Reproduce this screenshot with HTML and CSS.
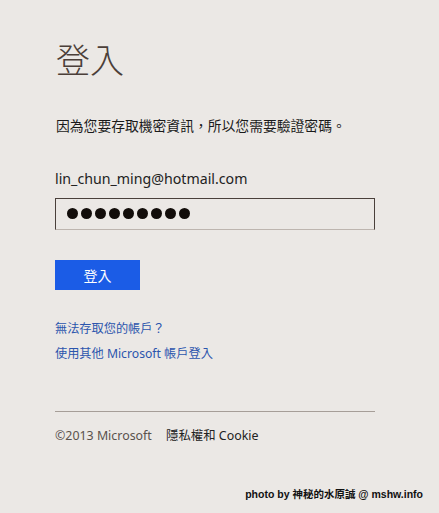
FILE: index.html
```html
<!DOCTYPE html>
<html lang="zh-Hant">
<head>
    <meta charset="UTF-8">
    <meta name="viewport" content="width=device-width, initial-scale=1.0">
    <title>登入</title>
    <link rel="stylesheet" href="styles.css">
</head>
<body>

    <div class="page">
        <h1 class="title">登入</h1>
        <p class="note">因為您要存取機密資訊，所以您需要驗證密碼。</p>

        <div class="account">lin_chun_ming@hotmail.com</div>
        <div class="password">
            <span class="dot"></span><span class="dot"></span><span class="dot"></span>
            <span class="dot"></span><span class="dot"></span><span class="dot"></span>
            <span class="dot"></span><span class="dot"></span><span class="dot"></span>
        </div>

        <button class="submit">登入</button>

        <div class="links">
            <a href="#">無法存取您的帳戶？</a>
            <a href="#">使用其他 Microsoft 帳戶登入</a>
        </div>

        <div class="footer">
            <span class="copy">©2013 Microsoft</span>
            <a href="#">隱私權和 Cookie</a>
        </div>
    </div>

    <div class="credit">photo by 神秘的水原誠 @ mshw.info</div>

</body>
</html>
```

FILE: styles.css
```css
body {
    margin: 0;
    padding: 0;
    background-color: #ebe8e5;
    font-family: "Noto Sans", "Noto Sans CJK TC", sans-serif;
    color: #1a1a1a;
}
.page {
    width: 320px;
    padding: 36px 0 0 55px;
}
.title {
    margin: 0 0 0 1px;
    font-size: 34px;
    font-weight: 300;
    line-height: 48px;
    color: #4b3f39;
}
.note {
    margin: 32px 0 0 1px;
    font-size: 13.8px;
    line-height: 20px;
}
.account {
    margin-top: 33px;
    font-size: 14.2px;
    line-height: 20px;
    color: #222;
}
.password {
    box-sizing: border-box;
    height: 32px;
    margin-top: 9px;
    padding: 9px 0 0 11px;
    border: 1px solid #4a403b;
    border-bottom-color: #bdb5af;
    display: flex;
    gap: 3px;
}
.dot {
    width: 11px;
    height: 11px;
    border-radius: 50%;
    background: #120d0a;
}
.submit {
    display: block;
    width: 85px;
    height: 30px;
    margin-top: 30px;
    padding: 0;
    border: none;
    background-color: #1b5ce6;
    color: #fff;
    font-family: inherit;
    font-size: 14px;
}
.links {
    margin-top: 29px;
    display: flex;
    flex-direction: column;
    gap: 5px;
}
.links a {
    font-size: 12.2px;
    line-height: 20px;
    color: #2b55ad;
    text-decoration: none;
}
.footer {
    margin-top: 47px;
    padding-top: 14px;
    border-top: 1px solid #a69e98;
    font-size: 12.4px;
    line-height: 20px;
}
.copy {
    color: #5a524d;
    margin-right: 11px;
}
.footer a {
    color: #222;
    text-decoration: none;
}
.credit {
    margin: 40px 16px 0 0;
    text-align: right;
    font-family: "Liberation Sans", "Noto Sans CJK TC", sans-serif;
    font-size: 10.5px;
    font-weight: bold;
    color: #111;
}
```
